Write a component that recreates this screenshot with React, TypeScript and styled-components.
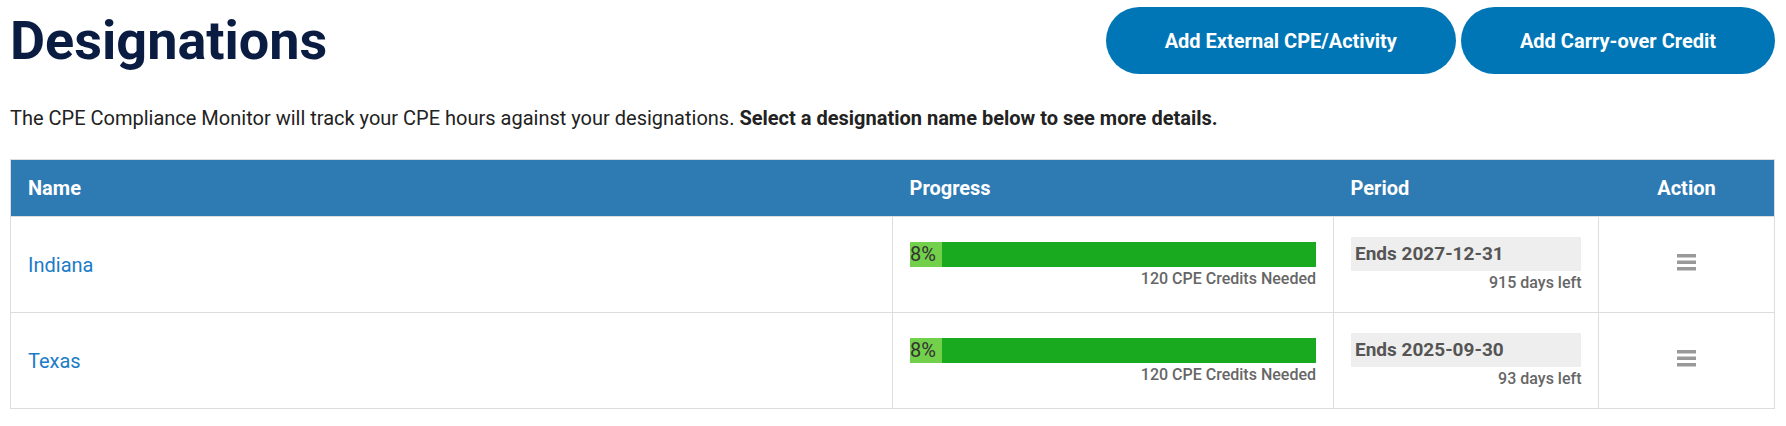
import React from 'react';
import styled, { createGlobalStyle } from 'styled-components';

const GlobalStyle = createGlobalStyle`
  body {
    margin: 0;
    background: #ffffff;
    font-family: Roboto, "Liberation Sans", Arial, sans-serif;
  }
`;

const Page = styled.div`
  padding: 7px 11px 0 10px;
`;

const TopBar = styled.div`
  display: flex;
  justify-content: space-between;
  align-items: center;
`;

const Title = styled.h1`
  margin: 0;
  font-size: 54px;
  font-weight: 700;
  color: #0b1c43;
  line-height: 1;
`;

const Buttons = styled.div`
  display: flex;
  gap: 5px;
`;

const PillButton = styled.button`
  height: 67px;
  padding: 0 59px;
  border: 0;
  border-radius: 34px;
  background-color: #0076b6;
  color: #ffffff;
  font-family: Roboto, "Liberation Sans", Arial, sans-serif;
  font-size: 20px;
  font-weight: 700;
  cursor: pointer;
`;

const Intro = styled.p`
  margin: 32px 0 29px;
  font-size: 20px;
  color: #222222;
  line-height: 24px;
`;

const Table = styled.table`
  width: 100%;
  border-collapse: collapse;
  table-layout: fixed;
  border: 1px solid #dddddd;
`;

const HeadCell = styled.th<{ $w: number; $center?: boolean }>`
  box-sizing: border-box;
  width: ${props => props.$w}%;
  height: 57px;
  padding: 0 17px;
  background-color: #2e7ab3;
  color: #ffffff;
  font-size: 20px;
  font-weight: 700;
  text-align: ${props => (props.$center ? 'center' : 'left')};
`;

const Cell = styled.td<{ $center?: boolean }>`
  height: 95px;
  padding: 0 17px;
  border: 1px solid #dddddd;
  vertical-align: middle;
  text-align: ${props => (props.$center ? 'center' : 'left')};
`;

const NameLink = styled.a`
  color: #1b7cc6;
  font-size: 20px;
  text-decoration: none;
  cursor: pointer;
`;

const Track = styled.div`
  display: flex;
  height: 25px;
  background-color: #1aaa1f;
`;

const Fill = styled.div`
  background-color: #72d04a;
  color: #333333;
  font-size: 20px;
  line-height: 25px;
  white-space: nowrap;
`;

const Note = styled.div`
  margin-top: 2px;
  text-align: right;
  color: #666666;
  font-size: 16px;
  font-weight: 500;
`;

const EndBox = styled.div`
  height: 34px;
  padding: 0 4px;
  background-color: #eeeeee;
  color: #555555;
  font-size: 19px;
  font-weight: 700;
  line-height: 34px;
`;

const MenuButton = styled.button`
  border: 0;
  background: none;
  padding: 0;
  cursor: pointer;
  display: inline-flex;
`;

const Bars = () => (
  <svg width="19" height="17" viewBox="0 0 19 17">
    <rect x="0" y="0" width="19" height="3.5" fill="#999999" />
    <rect x="0" y="6.5" width="19" height="3.5" fill="#999999" />
    <rect x="0" y="13" width="19" height="3.5" fill="#999999" />
  </svg>
);

const rows = [
  { name: 'Indiana', pct: 8, needed: 120, ends: '2027-12-31', left: 915 },
  { name: 'Texas', pct: 8, needed: 120, ends: '2025-09-30', left: 93 },
];

export default function App() {
  return (
    <>
      <GlobalStyle />
      <Page>
        <TopBar>
          <Title>Designations</Title>
          <Buttons>
            <PillButton>Add External CPE/Activity</PillButton>
            <PillButton>Add Carry-over Credit</PillButton>
          </Buttons>
        </TopBar>
        <Intro>
          The CPE Compliance Monitor will track your CPE hours against your designations.{' '}
          <b>Select a designation name below to see more details.</b>
        </Intro>
        <Table>
          <thead>
            <tr>
              <HeadCell $w={50}>Name</HeadCell>
              <HeadCell $w={25}>Progress</HeadCell>
              <HeadCell $w={15.05}>Period</HeadCell>
              <HeadCell $w={9.95} $center>Action</HeadCell>
            </tr>
          </thead>
          <tbody>
            {rows.map(r => (
              <tr key={r.name}>
                <Cell>
                  <NameLink>{r.name}</NameLink>
                </Cell>
                <Cell>
                  <Track>
                    <Fill style={{ width: `${r.pct}%` }}>{r.pct}%</Fill>
                  </Track>
                  <Note>{r.needed} CPE Credits Needed</Note>
                </Cell>
                <Cell>
                  <EndBox>Ends {r.ends}</EndBox>
                  <Note>{r.left} days left</Note>
                </Cell>
                <Cell $center>
                  <MenuButton>
                    <Bars />
                  </MenuButton>
                </Cell>
              </tr>
            ))}
          </tbody>
        </Table>
      </Page>
    </>
  );
}
